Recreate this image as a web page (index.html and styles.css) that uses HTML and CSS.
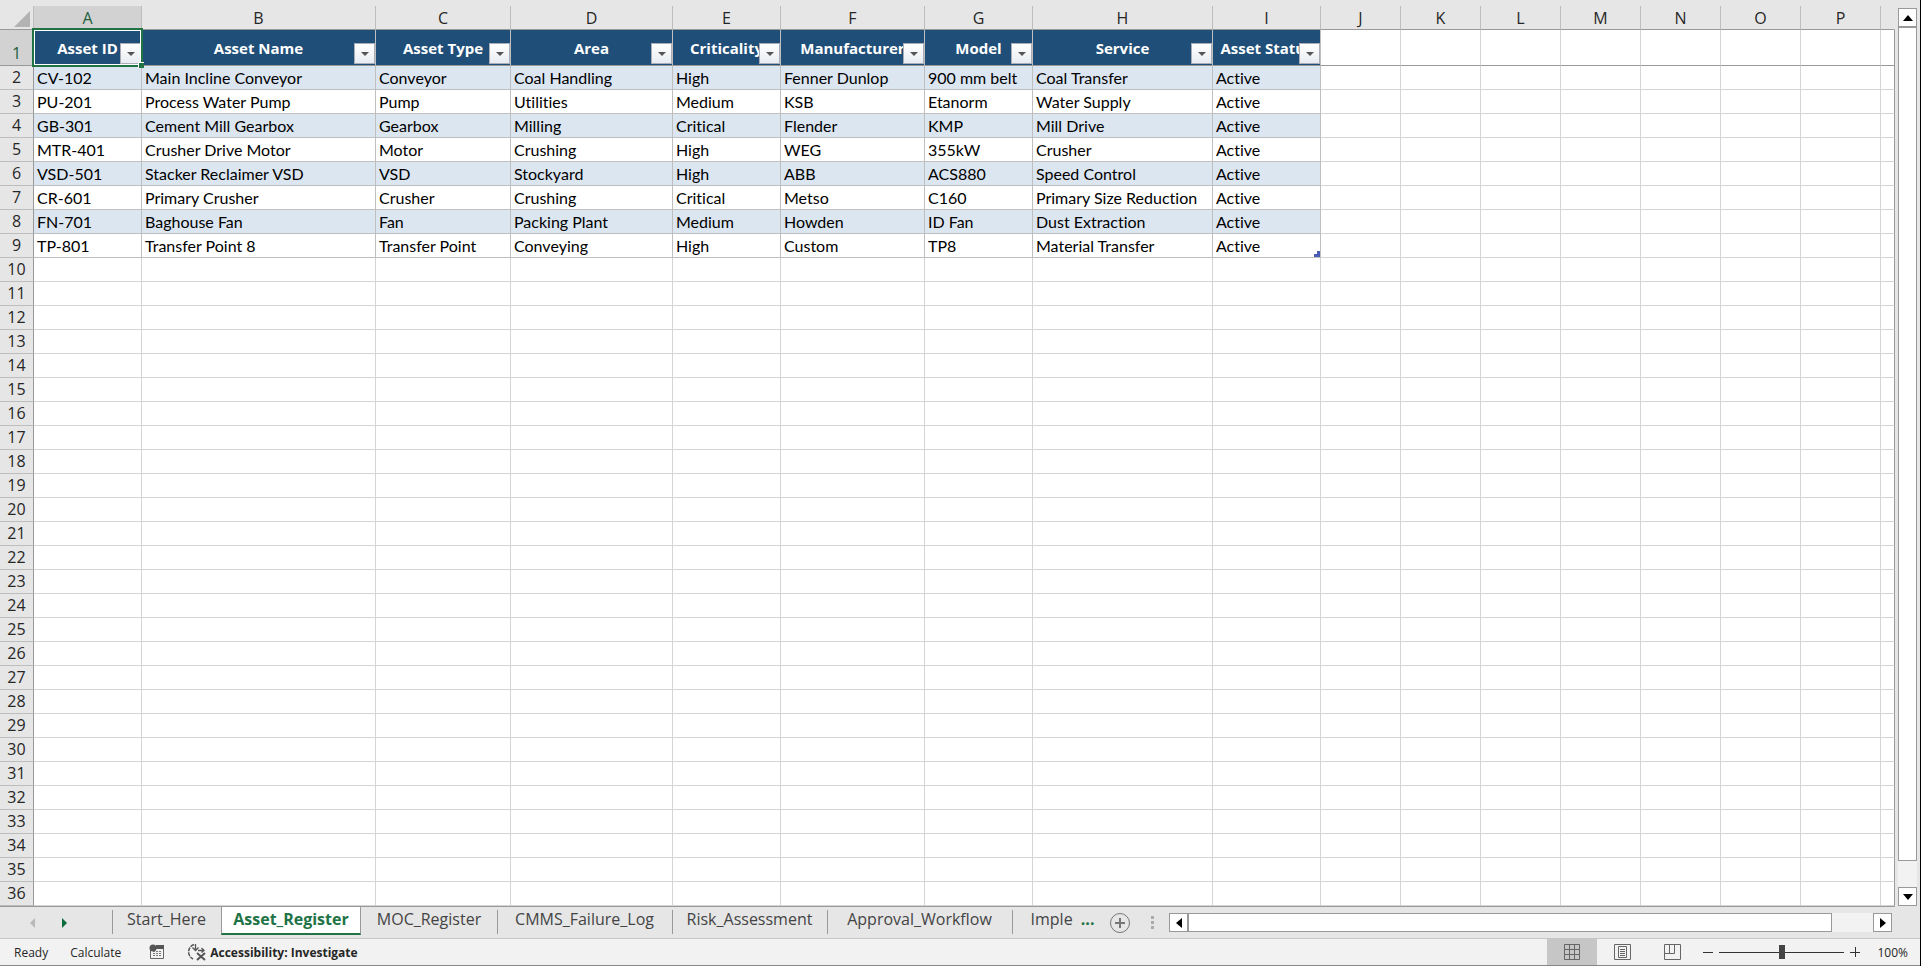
FILE: index.html
```html
<!DOCTYPE html>
<html lang="en">
<head>
  <meta charset="UTF-8">
  <title>Asset Register</title>
  <link rel="stylesheet" href="styles.css">
</head>
<body>
  <main class="workspace">
    <div class="sheet">
      <table class="grid">
        <colgroup>
          <col class="col-rownum">
          <col class="col-a"><col class="col-b"><col class="col-c"><col class="col-d"><col class="col-e">
          <col class="col-f"><col class="col-g"><col class="col-h"><col class="col-i">
          <col class="col-std"><col class="col-std"><col class="col-std"><col class="col-std">
          <col class="col-std"><col class="col-std"><col class="col-std">
          <col>
        </colgroup>
        <thead>
          <tr class="letters">
            <th class="corner"><svg width="16" height="16" viewBox="0 0 16 16"><path d="M16 0v16H0z" fill="#b3b3b3"/></svg></th>
            <th class="selected">A</th><th>B</th><th>C</th><th>D</th><th>E</th><th>F</th><th>G</th><th>H</th><th>I</th>
            <th>J</th><th>K</th><th>L</th><th>M</th><th>N</th><th>O</th><th>P</th><th></th>
          </tr>
        </thead>
        <tbody id="rows">
          <tr class="fields">
            <th class="rownum selected">1</th>
            <th class="field active-cell">Asset ID<button class="filter" aria-label="Filter Asset ID"></button><span class="selection"></span></th>
            <th class="field">Asset Name<button class="filter" aria-label="Filter Asset Name"></button></th>
            <th class="field">Asset Type<button class="filter" aria-label="Filter Asset Type"></button></th>
            <th class="field">Area<button class="filter" aria-label="Filter Area"></button></th>
            <th class="field">Criticality<button class="filter" aria-label="Filter Criticality"></button></th>
            <th class="field">Manufacturer<button class="filter" aria-label="Filter Manufacturer"></button></th>
            <th class="field">Model<button class="filter" aria-label="Filter Model"></button></th>
            <th class="field">Service<button class="filter" aria-label="Filter Service"></button></th>
            <th class="field">Asset Status<button class="filter" aria-label="Filter Asset Status"></button></th>
            <td></td><td></td><td></td><td></td><td></td><td></td><td></td><td></td>
          </tr>
          <tr class="record">
            <th class="rownum">2</th>
            <td>CV-102</td><td>Main Incline Conveyor</td><td>Conveyor</td><td>Coal Handling</td><td>High</td><td>Fenner Dunlop</td><td>900 mm belt</td><td>Coal Transfer</td><td>Active</td>
          </tr>
          <tr class="record">
            <th class="rownum">3</th>
            <td>PU-201</td><td>Process Water Pump</td><td>Pump</td><td>Utilities</td><td>Medium</td><td>KSB</td><td>Etanorm</td><td>Water Supply</td><td>Active</td>
          </tr>
          <tr class="record">
            <th class="rownum">4</th>
            <td>GB-301</td><td>Cement Mill Gearbox</td><td>Gearbox</td><td>Milling</td><td>Critical</td><td>Flender</td><td>KMP</td><td>Mill Drive</td><td>Active</td>
          </tr>
          <tr class="record">
            <th class="rownum">5</th>
            <td>MTR-401</td><td>Crusher Drive Motor</td><td>Motor</td><td>Crushing</td><td>High</td><td>WEG</td><td>355kW</td><td>Crusher</td><td>Active</td>
          </tr>
          <tr class="record">
            <th class="rownum">6</th>
            <td>VSD-501</td><td>Stacker Reclaimer VSD</td><td>VSD</td><td>Stockyard</td><td>High</td><td>ABB</td><td>ACS880</td><td>Speed Control</td><td>Active</td>
          </tr>
          <tr class="record">
            <th class="rownum">7</th>
            <td>CR-601</td><td>Primary Crusher</td><td>Crusher</td><td>Crushing</td><td>Critical</td><td>Metso</td><td>C160</td><td>Primary Size Reduction</td><td>Active</td>
          </tr>
          <tr class="record">
            <th class="rownum">8</th>
            <td>FN-701</td><td>Baghouse Fan</td><td>Fan</td><td>Packing Plant</td><td>Medium</td><td>Howden</td><td>ID Fan</td><td>Dust Extraction</td><td>Active</td>
          </tr>
          <tr class="record">
            <th class="rownum">9</th>
            <td>TP-801</td><td>Transfer Point 8</td><td>Transfer Point</td><td>Conveying</td><td>High</td><td>Custom</td><td>TP8</td><td>Material Transfer</td><td class="table-end">Active</td>
          </tr>
        </tbody>
      </table>
    </div>
    <div class="vscroll">
      <button class="scroll-btn" aria-label="Scroll up"><svg width="12" height="6" viewBox="0 0 12 6"><path d="M6 0l5 6H1z"/></svg></button>
      <div class="vtrack"><div class="vthumb"></div></div>
      <button class="scroll-btn" aria-label="Scroll down"><svg width="12" height="6" viewBox="0 0 12 6"><path d="M1 0h10L6 6z"/></svg></button>
    </div>
  </main>

  <nav class="tabbar">
    <div class="tab-nav">
      <button aria-label="Previous sheet" disabled><svg width="6" height="10" viewBox="0 0 6 10"><path d="M5 0v10L0 5z" fill="#b9b9b9"/></svg></button>
      <button aria-label="Next sheet"><svg width="6" height="10" viewBox="0 0 6 10"><path d="M0 0v10l5-5z" fill="#0e6b3b"/></svg></button>
    </div>
    <div class="tabs">
      <button class="tab">Start_Here</button>
      <button class="tab current">Asset_Register</button>
      <button class="tab">MOC_Register</button>
      <button class="tab">CMMS_Failure_Log</button>
      <button class="tab">Risk_Assessment</button>
      <button class="tab">Approval_Workflow</button>
      <button class="tab last">Imple <span class="more">...</span></button>
    </div>
    <button class="add" aria-label="New sheet"><svg width="22" height="22" viewBox="0 0 22 22" fill="none" stroke="#777"><circle cx="11" cy="11" r="9.5"/><path d="M11 6v10M6 11h10" stroke-width="2"/></svg></button>
    <svg class="grip" width="4" height="14" viewBox="0 0 4 14" fill="#ababab"><path d="M0 0h3v3H0zM0 5h3v3H0zM0 10h3v3H0z"/></svg>
    <div class="hscroll">
      <button class="scroll-btn" aria-label="Scroll left"><svg width="6" height="10" viewBox="0 0 6 10"><path d="M6 0v10L0 5z"/></svg></button>
      <div class="htrack"><div class="hthumb"></div></div>
      <button class="scroll-btn" aria-label="Scroll right"><svg width="6" height="10" viewBox="0 0 6 10"><path d="M0 0v10l6-5z"/></svg></button>
    </div>
  </nav>

  <footer class="statusbar">
    <span class="ready">Ready</span>
    <span class="calc">Calculate</span>
    <button class="macro" aria-label="Record macro">
      <svg width="16" height="16" viewBox="0 0 16 16"><path d="M1.500 6v8.500h13V4" fill="none" stroke="#666"/><path d="M7 1h8v4H7z" fill="#555"/><circle cx="4" cy="4" r="3.500" fill="#555"/><path d="M4 7.500h9M4 9.500h9M4 11.500h9" stroke="#777" stroke-dasharray="2 1"/></svg>
    </button>
    <button class="access">
      <svg width="20" height="18" viewBox="0 0 20 18" fill="none" stroke="#555"><path d="M7 1.500C0 4 0 13 6 16" stroke-width="1.500" stroke-dasharray="4 1"/><path d="M8.500 1v6M5.500 4.500l3 3 3-3M11 7.500h6M14.500 5l2.500 2.500-2.500 2" stroke-width="1.300"/><path d="M10 10l8 7M18 10l-8 7" stroke-width="2"/></svg>
      Accessibility: Investigate
    </button>
    <div class="views">
      <button class="view on" aria-label="Normal view"><svg width="16" height="16" viewBox="0 0 16 16" fill="none" stroke="#666"><path d="M.5.500h15v15H.5zM5.500.500v15M10.500.500v15M.5 5.500h15M.5 10.500h15"/></svg></button>
      <button class="view" aria-label="Page layout view"><svg width="17" height="16" viewBox="0 0 17 16" fill="none" stroke="#666"><path d="M.5.500h16v15H.5zM4.500 2.500h8v11h-8zM6 5.500h5M6 7.500h5M6 9.500h5M6 11.500h5"/></svg></button>
      <button class="view" aria-label="Page break view"><svg width="17" height="16" viewBox="0 0 17 16" fill="none" stroke="#666"><path d="M.5.500h16v15H.5zM.5 9.500h10V.5M5.500.500v9"/></svg></button>
    </div>
    <button class="step" aria-label="Zoom out"><svg width="10" height="10" viewBox="0 0 10 10" stroke="#333"><path d="M0 5.500h10"/></svg></button>
    <input class="zoom" type="range" min="0" max="200" value="100" aria-label="Zoom">
    <button class="step" aria-label="Zoom in"><svg width="10" height="10" viewBox="0 0 10 10" stroke="#333"><path d="M0 5.500h10M5.500 0v10"/></svg></button>
    <span class="percent">100%</span>
  </footer>
  <script src="script.js"></script>
</body>
</html>
```
FILE: styles.css
```css
* {
  box-sizing: border-box;
}
body {
  margin: 0;
  height: 100vh;
  display: flex;
  flex-direction: column;
  overflow: hidden;
  background: #e6e6e6;
  border-right: 1px solid #000;
  font-family: "Open Sans", "Noto Sans", sans-serif;
  color: #262626;
}
button {
  margin: 0;
  padding: 0;
  border: none;
  background: none;
  font: inherit;
  color: inherit;
}
svg {
  display: block;
}

/* worksheet */
.workspace {
  flex: 1;
  min-height: 0;
  display: flex;
}
.sheet {
  flex: 1;
  min-width: 0;
  padding-top: 6px;
  overflow: hidden;
  border-bottom: 1px solid #999;
}
.grid {
  width: 100%;
  table-layout: fixed;
  border-collapse: separate;
  border-spacing: 0;
}
.col-rownum { width: 34px; }
.col-a, .col-e, .col-g, .col-i { width: 108px; }
.col-b { width: 234px; }
.col-c { width: 135px; }
.col-d { width: 162px; }
.col-f { width: 144px; }
.col-h { width: 180px; }
.col-std { width: 80px; }

.grid th, .grid td {
  height: 24px;
  padding: 0;
  border-right: 1px solid #d4d4d4;
  border-bottom: 1px solid #d4d4d4;
  white-space: nowrap;
}
.grid td {
  padding-left: 3px;
  background: #fff;
  font-family: Lato, sans-serif;
  font-size: 16px;
  font-variant-ligatures: none;
  line-height: 23px;
  color: #000;
}
.grid th:last-child, .grid td:last-child {
  border-right-color: #999;
}
.grid .letters th {
  border-right: 1px solid #bdbdbd;
  border-bottom: 1px solid #999;
  font-size: 16px;
  font-weight: 400;
  line-height: 22px;
}
.grid .letters th:last-child {
  border-right-color: #e6e6e6;
}
.grid .letters .corner svg {
  margin: 3px 3px 0 auto;
}
.grid .rownum {
  border-right: 1px solid #999;
  border-bottom: 1px solid #bdbdbd;
  font-size: 16px;
  font-weight: 400;
  line-height: 23px;
}
.grid .letters .selected, .grid .rownum.selected {
  background: #d2d2d2;
  color: #1f5f3f;
}
.grid .fields th, .grid .fields td {
  height: 36px;
  border-bottom-color: #999;
}
.grid .fields .rownum {
  padding-top: 12px;
}
.grid .fields .field {
  position: relative;
  border-right-color: #bfbfbf;
  background: #1f4e78;
  color: #fff;
  font-size: 15px;
  line-height: 20px;
}
.grid .fields .active-cell {
  z-index: 1;
}
.grid .record td:nth-child(-n+10) {
  border-color: #bfbfbf;
}
.grid .record:nth-child(even) td:nth-child(-n+10) {
  background: #dce6f1;
}
.filter {
  position: absolute;
  right: 0;
  bottom: 1px;
  width: 21px;
  height: 21px;
  border: 1px solid #a9adb8;
  background: linear-gradient(#fff, #e8ecf2);
}
.filter::before {
  content: "";
  display: block;
  width: 0;
  margin: 0 auto;
  border: 4px solid transparent;
  border-top-color: #555;
  border-bottom: none;
}
.selection {
  position: absolute;
  inset: -2px;
  border: 2px solid #217346;
  box-shadow: inset 0 0 0 1px #fff;
  pointer-events: none;
}
.selection::after {
  content: "";
  position: absolute;
  right: -3px;
  bottom: -3px;
  width: 5px;
  height: 5px;
  border: 1px solid #fff;
  border-width: 1px 0 0 1px;
  background: #217346;
}
/* resize mark in the last cell of the table */
.grid .record .table-end {
  background:
    linear-gradient(#4a5bb5, #4a5bb5) right bottom / 6px 3px no-repeat,
    linear-gradient(#4a5bb5, #4a5bb5) right bottom / 3px 6px no-repeat,
    #fff;
}

/* scrollbars */
.scroll-btn {
  display: flex;
  align-items: center;
  justify-content: center;
  flex: none;
  width: 19px;
  height: 19px;
  border: 1px solid #999;
  background: #fff;
}
.vscroll {
  display: flex;
  flex-direction: column;
  width: 25px;
  padding: 8px 3px 1px;
}
.vtrack {
  flex: 1;
  background: #f2f2f2;
}
.vthumb {
  height: 97%;
  border: 1px solid #999;
  background: #fff;
}
.hscroll {
  display: flex;
  flex: 1;
  padding-right: 28px;
}
.htrack {
  flex: 1;
  background: #f2f2f2;
}
.hthumb {
  width: 94%;
  height: 19px;
  border: 1px solid #999;
  background: #fff;
}

/* sheet tabs */
.tabbar {
  display: flex;
  align-items: center;
  height: 32px;
  border-bottom: 1px solid #c6c6c6;
}
.tab-nav {
  display: flex;
  gap: 26px;
  width: 112px;
  padding-left: 30px;
}
.tabs {
  display: grid;
  grid-template-columns: 109px 140px 136px 175px 155px 185px 89px;
  align-self: flex-start;
  height: 28px;
}
.tab {
  position: relative;
  padding-bottom: 4px;
  font-size: 16px;
  line-height: 24px;
  color: #444;
  white-space: nowrap;
}
.tab:not(.current)::before {
  content: "";
  position: absolute;
  left: 0;
  top: 3px;
  width: 1px;
  height: 24px;
  background: #999;
}
.tab.current + .tab::before {
  display: none;
}
.tab.current {
  border: 1px solid #999;
  border-width: 0 1px 2px;
  border-bottom-color: #217346;
  padding-bottom: 2px;
  background: #fff;
  color: #217346;
  font-weight: 700;
}
.tab.last {
  padding-left: 12px;
}
.more {
  margin-left: 4px;
  color: #217346;
  font-weight: 700;
}
.add {
  margin-left: 8px;
}
.grip {
  margin: 0 14px 0 20px;
}

/* status bar */
.statusbar {
  display: flex;
  align-items: center;
  height: 27px;
  padding: 0 12px 0 14px;
  background: #f2f2f2;
  border-bottom: 1px solid #888;
  font-size: 12px;
}
.calc {
  margin-left: 22px;
}
.macro {
  margin-left: 28px;
}
.access {
  display: flex;
  align-items: center;
  gap: 3px;
  margin-left: 22px;
  font-weight: 700;
}
.views {
  display: flex;
  height: 26px;
  margin: 0 6px 0 auto;
}
.view {
  display: flex;
  align-items: center;
  justify-content: center;
  width: 50px;
}
.view.on {
  background: #c6c6c6;
}
.zoom {
  appearance: none;
  width: 125px;
  height: 14px;
  margin: 0 6px;
  background: linear-gradient(#333, #333) center / 100% 1px no-repeat;
}
.zoom::-webkit-slider-thumb {
  appearance: none;
  width: 6px;
  height: 14px;
  background: #444;
}
.percent {
  margin-left: 17px;
}
```
FILE: script.js
```js
const LAST_ROW = 36;
const COLUMNS = 17;
const body = document.getElementById("rows");

// fill each record out to the right edge
body.querySelectorAll(".record").forEach(row => {
  while (row.cells.length <= COLUMNS) row.insertCell();
});

// blank rows below the table
for (let n = body.rows.length + 1; n <= LAST_ROW; n++) {
  const row = body.insertRow();
  const head = document.createElement("th");
  head.className = "rownum";
  head.textContent = n;
  row.appendChild(head);
  for (let c = 0; c < COLUMNS; c++) row.insertCell();
}
```
